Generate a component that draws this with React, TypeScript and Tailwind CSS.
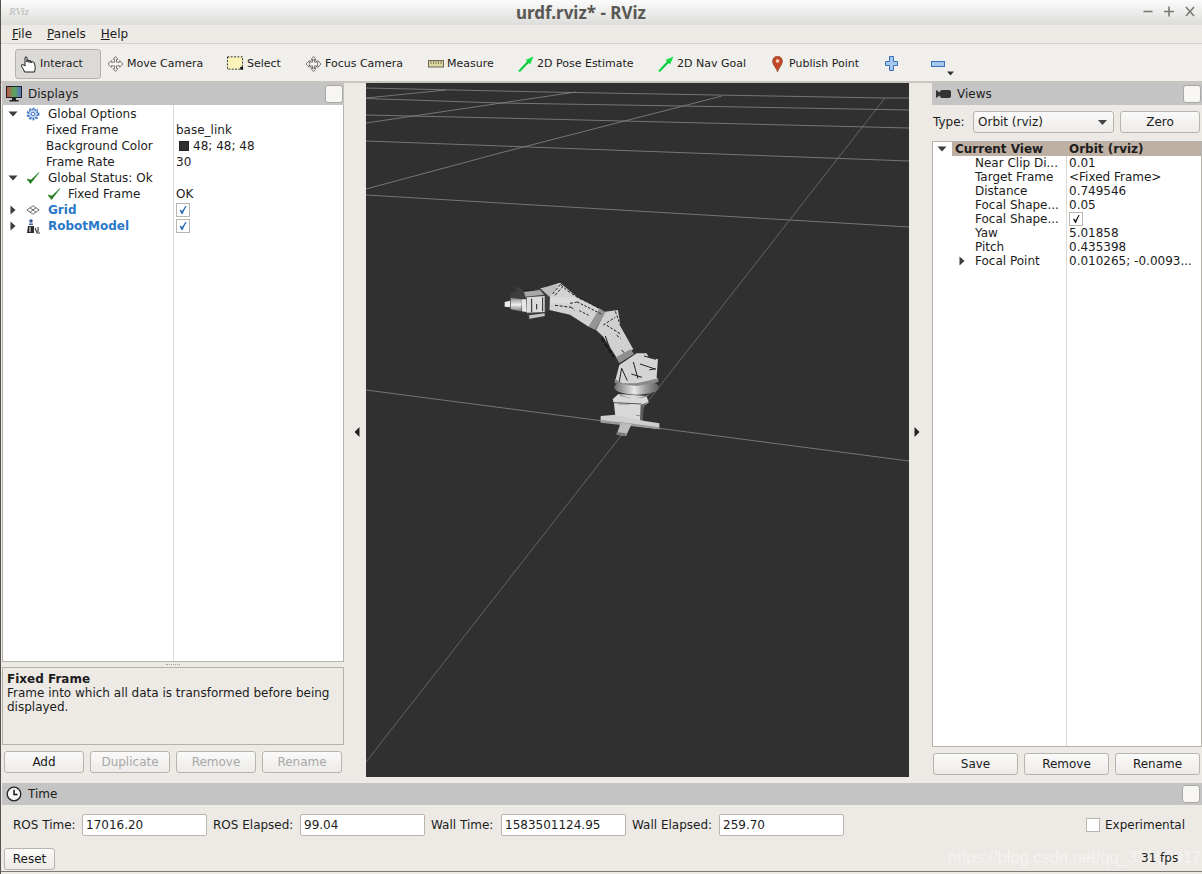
import React from "react";

const Check = ({ x = 0 }: { x?: number }) => (
  <svg width="14" height="14" viewBox="0 0 14 14" style={{ marginLeft: x }}>
    <path d="M1 8 L4.5 12.5 L13 1.5 L5 9 Z" fill="#1d7a1d" stroke="#1d7a1d" strokeWidth="0.6" />
  </svg>
);

const Tri = ({ open }: { open?: boolean }) =>
  open ? (
    <svg width="10" height="10" viewBox="0 0 10 10"><path d="M0.5 2.5 H9.5 L5 7.5 Z" fill="#3c3c3c" /></svg>
  ) : (
    <svg width="10" height="10" viewBox="0 0 10 10"><path d="M2.5 0.5 V9.5 L7.5 5 Z" fill="#3c3c3c" /></svg>
  );

const Box = () => (
  <span className="flex h-[14px] w-[14px] items-center justify-center border border-[#b9b6b0] bg-white">
    <svg width="10" height="10" viewBox="0 0 10 10"><path d="M2 5 L4 9 L8 1 L4.2 6.5 Z" fill="#1f5fb0" stroke="#1f5fb0" strokeWidth="0.8" /></svg>
  </span>
);

const Float = () => <span className="h-[18px] w-[18px] rounded-[3px] border border-[#a9a7a3] bg-[#f7f6f4]" />;

const Btn = ({ children, w, off }: { children: React.ReactNode; w: string; off?: boolean }) => (
  <button className={`flex h-[22px] items-center justify-center rounded-[3px] border border-[#b8b4ae] bg-gradient-to-b from-[#fbfafa] to-[#ecebe8] ${w} ${off ? "text-[#a8a8a6]" : "text-[#1a1a1a]"}`}>
    {children}
  </button>
);

const Row = ({ left, right }: { left: React.ReactNode; right?: React.ReactNode }) => (
  <div className="flex h-4 items-center">
    <div className="flex h-4 w-[171px] items-center">{left}</div>
    <div className="flex h-4 items-center pl-[2px]">{right}</div>
  </div>
);

const VRow = ({ a, b, tri }: { a: string; b: React.ReactNode; tri?: boolean }) => (
  <div className="flex h-[14px] items-center">
    <div className="relative flex h-[14px] w-[134px] items-center pl-[42px]">
      {tri && <span className="absolute left-[24px] top-[2px]"><Tri /></span>}
      <span className="whitespace-nowrap">{a}</span>
    </div>
    <div className="flex h-[14px] items-center pl-[2px]">{b}</div>
  </div>
);

const Field = ({ label, value, lw }: { label: string; value: string; lw: string }) => (
  <div className="flex items-center">
    <span className={`whitespace-nowrap ${lw}`}>{label}</span>
    <span className="flex h-[22px] w-[125px] items-center rounded-[2px] border border-[#b9b6b0] bg-white pl-[3px]">{value}</span>
  </div>
);

const Tool = ({ w, icon, label, active }: { w: string; icon: React.ReactNode; label: string; active?: boolean }) => (
  <div className={`flex h-[30px] shrink-0 items-center gap-[3px] ${w} ${active ? "rounded-[3px] border border-[#b4b1ab] bg-[#dcdad6] pl-[4px]" : "pl-[6px]"}`}>
    <span className="flex h-[18px] w-[17px] shrink-0 items-center justify-center">{icon}</span>
    {label && <span className="whitespace-nowrap">{label}</span>}
  </div>
);

const Cross = ({ ring }: { ring?: boolean }) => (
  <svg width="18" height="18" viewBox="0 0 18 18" fill="none" stroke="#77736d" strokeWidth="1">
    <path d="M9 1 L11.5 4 H10 V7 H13.5 V5.5 L17 9 L13.5 12.5 V11 H10 V14 H11.5 L9 17 L6.5 14 H8 V11 H4.5 V12.5 L1 9 L4.5 5.5 V7 H8 V4 H6.5 Z" fill="#f5f4f1" />
    {ring && <circle cx="9" cy="9" r="4.5" />}
  </svg>
);

const Goal = () => (
  <svg width="16" height="16" viewBox="0 0 16 16">
    <path d="M1 15.5 L10 6" stroke="#14e04a" strokeWidth="2.2" />
    <path d="M15.5 0.5 L7.5 4 L12 8.5 Z" fill="#12e045" />
    <path d="M3 13.5 L11 5" stroke="#0a7a2a" strokeWidth="0.6" />
  </svg>
);

const Robot = () => (
  <g transform="translate(124 187) scale(0.3333)">
    <defs>
      <linearGradient id="disk" x1="0" x2="1" y1="0" y2="0">
        <stop offset="0" stopColor="#6e6e6e" />
        <stop offset="0.45" stopColor="#e8e8e8" />
        <stop offset="0.7" stopColor="#9c9c9c" />
        <stop offset="1" stopColor="#5e5e5e" />
      </linearGradient>
      <linearGradient id="cyl" x1="0" x2="0" y1="0" y2="1">
        <stop offset="0" stopColor="#8a8a8a" />
        <stop offset="0.5" stopColor="#efefef" />
        <stop offset="1" stopColor="#777" />
      </linearGradient>
    </defs>
    {/* base */}
    <path d="M368 388 L385 372 L470 378 L476 398 L460 408 L458 452 L376 440 L372 400 Z" fill="#d9d9d9" />
    <path d="M452 405 L476 396 L460 408 L459 452 L450 452 Z" fill="#5c5c5c" />
    <path d="M372 398 L455 402" stroke="#555" strokeWidth="3" />
    <path d="M332 438 L376 434 L460 452 L508 460 L508 478 L420 466 L332 456 Z" fill="#cfcfcf" />
    <path d="M332 450 L420 460 L508 472 L508 478 L420 468 L332 458 Z" fill="#9a9a9a" />
    <path d="M392 458 L425 462 L408 498 L380 494 Z" fill="#bdbdbd" />
    <path d="M380 486 L408 490 L406 498 L380 494 Z" fill="#7c7c7c" />
    {/* disk */}
    <ellipse cx="440" cy="352" rx="67" ry="22" fill="url(#disk)" />
    <path d="M385 372 Q440 396 490 366 L470 380 Q435 392 392 378 Z" fill="url(#disk)" />
    {/* shoulder */}
    <path d="M388 285 L440 250 L470 250 L476 262 L504 268 L500 322 L505 335 L440 346 L374 338 Z" fill="#d4d4d4" />
    <path d="M374 326 L398 340 L440 340 L505 325 L505 336 L440 348 L376 340 Z" fill="#888" />
    {/* forearm */}
    <path d="M318 180 L345 125 L384 120 L392 170 L430 238 L382 266 L340 200 Z" fill="#d0d0d0" />
    <path d="M378 262 L422 238 L432 252 L388 280 Z" fill="#8f8f8f" />
    <path d="M296 170 L328 115 L346 126 L316 180 Z" fill="#959595" />
    {/* upper arm */}
    <path d="M152 56 L210 38 L262 82 L328 116 L296 170 L240 134 L178 120 L178 82 Z" fill="#d2d2d2" />
    <path d="M178 82 L262 82 L262 100 L178 100 Z" fill="#dcdcdc" />
    <path d="M150 55 L205 44 L178 84 Z" fill="#bcbcbc" />
    {/* wrist */}
    <path d="M78 48 L100 60 L152 56 L180 82 L178 120 L166 122 L166 140 L118 150 L108 128 L94 126 L62 118 L60 70 L78 62 Z" fill="#3e3e3e" />
    <path d="M62 84 L96 88 L94 124 L62 118 Z" fill="url(#cyl)" />
    <path d="M44 96 L60 92 L60 112 L44 110 Z" fill="#ececec" />
    <path d="M96 88 L108 88 L110 126 L96 124 Z" fill="#e6e6e6" />
    <path d="M110 82 L164 78 L164 126 L110 128 Z" fill="#dcdcdc" />
    <path d="M102 66 L150 60 L162 74 L106 80 Z" fill="#a8a8a8" />
    <path d="M118 136 L164 130 L164 138 L118 146 Z" fill="#c6c6c6" />
    <g stroke="#1e1e1e" strokeWidth="3" fill="none">
      <path d="M100 62 L135 60 M140 102 L140 118 M125 86 L125 126 M158 82 L158 124" />
      <path d="M195 106 L245 112 M240 100 L262 96 M188 72 L212 42 M195 76 L218 50 M212 44 L232 62 L262 82 L300 100 L330 116" strokeDasharray="9 5" />
      <path d="M262 96 L338 134 M268 122 L300 138 M245 112 L254 122" strokeDasharray="7 5" />
      <path d="M340 165 L376 142 M350 166 L392 192 M376 124 L392 168 M380 196 L392 205" strokeDasharray="8 5" />
      <path d="M395 240 L402 248 M395 295 L388 335 M395 295 L412 332 M430 276 L444 326 M424 312 L456 322 M450 282 L498 298 M462 258 L498 268 M478 300 L496 296" />
    </g>
    <path d="M334 204 L372 262" stroke="#151515" strokeWidth="5" strokeDasharray="16 4" />
    <path d="M346 198 L358 232" stroke="#151515" strokeWidth="3" />
    <path d="M385 402 L418 402 M438 436 L456 438" stroke="#666" strokeWidth="2" />
  </g>
);

const Scene = () => (
  <svg className="h-full w-full" viewBox="0 0 543 694" fill="none">
    <g stroke="#828282" strokeWidth="0.85">
      <path d="M0 5 L179 9 L519 15 L543 15" />
      <path d="M0 15.5 L134 20 L376 24 L543 27" />
      <path d="M0 32 L134 35 L543 45" />
      <path d="M0 58 L543 78" />
      <path d="M0 112 L134 120 L543 144" />
      <path d="M0 307 L543 378" />
      <path d="M0 40 L210 9" />
      <path d="M0 15 L80 7" />
      <path d="M0 106 L134 70 L356 13" />
      <path d="M519 15 L0 679" strokeWidth="0.65" />
    </g>
    <Robot />
  </svg>
);

const Dots = ({ w = "w-[14px]" }: { w?: string }) => (
  <span className={`${w} h-[2px] border-t border-dotted border-[#a8a5a0]`} />
);

export default function App() {
  return (
    <div className="relative flex h-[874px] w-[1202px] flex-col overflow-hidden border-l border-[#54524e] bg-[#edeae6] font-['DejaVu_Sans',sans-serif] text-[12px] leading-none text-[#1c1c1c]">
      {/* title bar */}
      <div className="relative flex h-[25px] shrink-0 items-center justify-center bg-gradient-to-b from-[#fbfbfb] to-[#dcdcda]">
        <span className="absolute left-[8px] top-[6px] font-['Liberation_Serif',serif] text-[11px] italic text-[#b9b9b7]">RViz</span>
        <span className="mr-[41px] font-['Noto_Sans',sans-serif] text-[17px] font-bold text-[#5a5854]">urdf.rviz* - RViz</span>
        <div className="absolute right-[6px] top-[4px] flex items-center gap-[9px]">
          <svg width="12" height="14" viewBox="0 0 12 14"><path d="M1.5 7.5 H10.5" stroke="#7a7874" strokeWidth="1.6" /></svg>
          <svg width="12" height="14" viewBox="0 0 12 14"><path d="M1 7.5 H11 M6 2.5 V12.5" stroke="#7a7874" strokeWidth="1.6" /></svg>
          <svg width="12" height="14" viewBox="0 0 12 14"><path d="M2 3 L10 12 M10 3 L2 12" stroke="#7a7874" strokeWidth="1.6" /></svg>
        </div>
      </div>
      {/* menu */}
      <div className="flex h-[19px] shrink-0 items-center gap-[15px] border-b border-[#d6d3ce] pl-[11px]">
        <span><u>F</u>ile</span>
        <span><u>P</u>anels</span>
        <span><u>H</u>elp</span>
      </div>
      {/* toolbar */}
      <div className="flex h-[39px] shrink-0 items-center border-b-2 border-[#c9c6c1] bg-[#f1efeb] pl-[14px] pt-[2px] text-[11px]">
        <Tool w="w-[86px]" active label="Interact" icon={
          <svg width="17" height="18" viewBox="0 0 17 18" fill="#fff" stroke="#1c1c1c" strokeWidth="1">
            <path d="M5 9 V2.5 Q6 1 7 2.5 V7 V5.5 Q8 4.5 9 5.5 V7.5 V6 Q10 5 11 6 V8 V7 Q12 6 13.5 7 C15.5 9 15.5 14 14.5 17 H4.5 C4 14 1 12 1.5 10 Q2.5 8.5 5 11 Z" />
          </svg>} />
        <Tool w="w-[120px]" label="Move Camera" icon={<Cross />} />
        <Tool w="w-[78px]" label="Select" icon={
          <svg width="18" height="15" viewBox="0 0 18 15"><rect x="0.5" y="0.5" width="16" height="13" fill="#fbf3b8" stroke="#222" strokeDasharray="2 1.5" /><rect x="14" y="11" width="3" height="3" fill="#111" /></svg>} />
        <Tool w="w-[122px]" label="Focus Camera" icon={<Cross ring />} />
        <Tool w="w-[90px]" label="Measure" icon={
          <svg width="16" height="8" viewBox="0 0 16 8"><rect x="0.5" y="0.5" width="15" height="6.5" fill="#dcd6a0" stroke="#6b6850" /><path d="M3 1 V4 M5.5 1 V4 M8 1 V4 M10.5 1 V4 M13 1 V4" stroke="#6b6850" strokeWidth="0.8" /></svg>} />
        <Tool w="w-[140px]" label="2D Pose Estimate" icon={<Goal />} />
        <Tool w="w-[112px]" label="2D Nav Goal" icon={<Goal />} />
        <Tool w="w-[114px]" label="Publish Point" icon={
          <svg width="11" height="16" viewBox="0 0 11 16"><path d="M5.5 16 C4.5 12 0.5 9 0.5 5.2 A5 5 0 0 1 10.5 5.2 C10.5 9 6.5 12 5.5 16 Z" fill="#c04a28" stroke="#7a3a22" strokeWidth="0.5" /><circle cx="5.5" cy="5" r="1.8" fill="#f3d6c4" /></svg>} />
        <Tool w="w-[46px]" label="" icon={
          <svg width="13" height="15" viewBox="0 0 13 15"><path d="M4.5 0.5 H8.5 V5.5 H12.5 V9.5 H8.5 V14.5 H4.5 V9.5 H0.5 V5.5 H4.5 Z" fill="#a6c8ee" stroke="#3a70b8" /></svg>} />
        <Tool w="w-[24px]" label="" icon={
          <svg width="14" height="6" viewBox="0 0 14 6"><rect x="0.5" y="0.5" width="13" height="5" fill="#a6c8ee" stroke="#3a70b8" /></svg>} />
        <svg className="mt-[19px]" width="7" height="5" viewBox="0 0 7 5"><path d="M0 0.5 H7 L3.5 4.5 Z" fill="#333" /></svg>
      </div>
      {/* main */}
      <div className="flex h-[694px] shrink-0 pl-px">
        {/* left panel */}
        <div className="flex w-[342px] shrink-0 flex-col pb-[4px]">
          <div className="flex h-[22px] shrink-0 items-center justify-between bg-[#c4c4c4] pl-[4px] pr-[1px]">
            <div className="flex items-center gap-[6px]">
              <svg width="16" height="16" viewBox="0 0 16 16">
                <defs><linearGradient id="rb" x1="0" x2="1" y1="0" y2="0"><stop offset="0" stopColor="#c94c4c" /><stop offset="0.5" stopColor="#58a858" /><stop offset="1" stopColor="#5c6cc8" /></linearGradient></defs>
                <rect x="0.5" y="0.5" width="15" height="11" fill="url(#rb)" stroke="#222" />
                <path d="M6 12 H10 V14 H12.5 V15.5 H3.5 V14 H6 Z" fill="#222" />
              </svg>
              <span>Displays</span>
            </div>
            <Float />
          </div>
          <div className="flex min-h-0 flex-1 flex-col border border-t-0 border-[#b5b2ac] bg-white">
            <div className="relative flex-1 pt-[1px]">
              <div className="absolute bottom-0 left-[170px] top-0 w-px bg-[#dcdad6]" />
              <Row left={<><span className="ml-[5px]"><Tri open /></span><svg className="ml-[8px]" width="14" height="14" viewBox="0 0 14 14"><circle cx="7" cy="7" r="4.6" fill="#cfe0f6" stroke="#3f76c4" strokeWidth="1.6" strokeDasharray="2 0.8" /><circle cx="7" cy="7" r="5.8" fill="none" stroke="#3f76c4" strokeWidth="1.4" strokeDasharray="1.6 2.2" /><circle cx="7" cy="7" r="1.8" fill="#fff" stroke="#3f76c4" /></svg><span className="ml-[8px]">Global Options</span></>} />
              <Row left={<span className="ml-[43px]">Fixed Frame</span>} right="base_link" />
              <Row left={<span className="ml-[43px]">Background Color</span>} right={<><span className="ml-[3px] mr-[4px] h-[10px] w-[10px] border border-[#222] bg-[#303030]" />48; 48; 48</>} />
              <Row left={<span className="ml-[43px]">Frame Rate</span>} right="30" />
              <Row left={<><span className="ml-[5px]"><Tri open /></span><span className="ml-[8px] flex"><Check /></span><span className="ml-[8px]">Global Status: Ok</span></>} />
              <Row left={<><span className="ml-[44px] flex"><Check /></span><span className="ml-[7px]">Fixed Frame</span></>} right="OK" />
              <Row left={<><span className="ml-[5px]"><Tri /></span><svg className="ml-[8px]" width="14" height="10" viewBox="0 0 14 10" fill="none" stroke="#4a4a4a"><path d="M7 0.8 L13.2 5 L7 9.2 L0.8 5 Z M4 2.8 L10 7.2 M10 2.8 L4 7.2" strokeWidth="0.8" /></svg><span className="ml-[8px] font-bold text-[#2a78c8]">Grid</span></>} right={<Box />} />
              <Row left={<><span className="ml-[5px]"><Tri /></span><svg className="ml-[8px]" width="15" height="15" viewBox="0 0 15 15"><circle cx="5" cy="2" r="1.8" fill="#35558a" /><rect x="3" y="4.5" width="4" height="1.4" fill="#35558a" /><path d="M2 7 H8 V14 H1 Z" fill="#2c2c2c" /><path d="M4 8 V13" stroke="#fff" strokeWidth="1" /><path d="M9 9 L11 14 L14 14 M12 8 L12 13" stroke="#333" strokeWidth="1.1" fill="none" /></svg><span className="ml-[7px] font-bold text-[#2a78c8]">RobotModel</span></>} right={<Box />} />
            </div>
          </div>
          <div className="flex h-[5px] shrink-0 items-center justify-center"><Dots /></div>
          <div className="h-[78px] shrink-0 border border-[#b5b2ac] px-[4px] pt-[4px] leading-[14px]">
            <div className="font-bold">Fixed Frame</div>
            <div className="mt-0">Frame into which all data is transformed before being displayed.</div>
          </div>
          <div className="mt-[6px] flex gap-[6px] pl-[2px]">
            <Btn w="w-[80px]">Add</Btn>
            <Btn w="w-[80px]" off>Duplicate</Btn>
            <Btn w="w-[80px]" off>Remove</Btn>
            <Btn w="w-[80px]" off>Rename</Btn>
          </div>
        </div>
        {/* left splitter */}
        <div className="flex w-[22px] shrink-0 items-center justify-center pt-[4px]">
          <svg className="ml-[4px]" width="6" height="10" viewBox="0 0 6 10"><path d="M5.5 0 V10 L0.5 5 Z" fill="#222" /></svg>
        </div>
        {/* viewport */}
        <div className="w-[543px] shrink-0 bg-[#303030]"><Scene /></div>
        {/* right splitter */}
        <div className="flex w-[23px] shrink-0 items-center pl-[5px] pt-[4px]">
          <svg width="6" height="10" viewBox="0 0 6 10"><path d="M0.5 0 V10 L5.5 5 Z" fill="#222" /></svg>
        </div>
        {/* right panel */}
        <div className="flex w-[270px] shrink-0 flex-col">
          <div className="flex h-[22px] shrink-0 items-center justify-between bg-[#c4c4c4] pl-[4px] pr-[1px]">
            <div className="flex items-center gap-[6px]">
              <svg width="15" height="10" viewBox="0 0 15 10"><path d="M0 1 L4 3.5 V6.5 L0 9 Z" fill="#333" /><rect x="4" y="1" width="11" height="8" rx="2" fill="#333" /></svg>
              <span>Views</span>
            </div>
            <Float />
          </div>
          <div className="mt-[6px] flex h-[22px] shrink-0 items-center">
            <span className="ml-[1px] w-[40px]">Type:</span>
            <div className="flex h-[22px] w-[141px] items-center justify-between rounded-[3px] border border-[#b8b4ae] bg-gradient-to-b from-[#fbfafa] to-[#ecebe8] pl-[4px] pr-[6px]">
              <span>Orbit (rviz)</span>
              <svg width="9" height="5" viewBox="0 0 9 5"><path d="M0 0 H9 L4.5 5 Z" fill="#444" /></svg>
            </div>
            <div className="ml-[6px]"><Btn w="w-[80px]">Zero</Btn></div>
          </div>
          <div className="relative mt-[8px] h-[606px] shrink-0 border border-[#b5b2ac] bg-white">
            <div className="absolute bottom-0 left-[133px] top-0 w-px bg-[#dcdad6]" />
            <div className="relative flex h-[14px] items-center font-bold">
              <span className="absolute left-[4px] top-[2px]"><Tri open /></span>
              <div className="ml-[19px] flex h-[14px] flex-1 items-center bg-[#bfb0a4]">
                <span className="w-[114px] pl-[3px]">Current View</span>
                <span className="pl-[3px]">Orbit (rviz)</span>
              </div>
            </div>
            <VRow a="Near Clip Di..." b="0.01" />
            <VRow a="Target Frame" b="<Fixed Frame>" />
            <VRow a="Distance" b="0.749546" />
            <VRow a="Focal Shape..." b="0.05" />
            <VRow a="Focal Shape..." b={
              <span className="flex h-[14px] w-[14px] items-center justify-center border border-[#b9b6b0]">
                <svg width="9" height="10" viewBox="0 0 9 10"><path d="M1.5 5 L3.5 9 L7 1 L3.8 6.5 Z" fill="#111" stroke="#111" strokeWidth="0.7" /></svg>
              </span>} />
            <VRow a="Yaw" b="5.01858" />
            <VRow a="Pitch" b="0.435398" />
            <VRow a="Focal Point" b="0.010265; -0.0093..." tri />
          </div>
          <div className="mt-[6px] flex gap-[6px] pl-px">
            <Btn w="w-[85px]">Save</Btn>
            <Btn w="w-[85px]">Remove</Btn>
            <Btn w="w-[85px]">Rename</Btn>
          </div>
        </div>
      </div>
      {/* time */}
      <div className="mt-[6px] ml-px flex h-[22px] shrink-0 items-center justify-between bg-[#c4c4c4] pl-[4px] pr-[2px]">
        <div className="flex items-center gap-[6px]">
          <svg width="16" height="16" viewBox="0 0 16 16" fill="none"><circle cx="8" cy="8" r="6.8" fill="#f5f5f5" stroke="#222" strokeWidth="1.3" /><path d="M8 3.8 V8.5 H11.5" stroke="#111" strokeWidth="1.4" /></svg>
          <span>Time</span>
        </div>
        <Float />
      </div>
      <div className="mt-[9px] flex h-[22px] shrink-0 items-center pl-[12px]">
        <div className="flex gap-[6px]">
          <Field label="ROS Time:" value="17016.20" lw="w-[69px]" />
          <Field label="ROS Elapsed:" value="99.04" lw="w-[87px]" />
          <Field label="Wall Time:" value="1583501124.95" lw="w-[70px]" />
          <Field label="Wall Elapsed:" value="259.70" lw="w-[87px]" />
        </div>
        <span className="ml-[242px] h-[14px] w-[14px] border border-[#b9b6b0] bg-white" />
        <span className="ml-[5px]">Experimental</span>
      </div>
      <div className="relative mt-[12px] flex h-[22px] shrink-0 items-center pl-[3px]">
        <Btn w="w-[51px]">Reset</Btn>
        <span className="absolute left-[947px] top-[-2px] whitespace-nowrap font-['Liberation_Sans',sans-serif] text-[16.5px] leading-[22px] text-white/45">https://blog.csdn.net/qq_37266917</span>
        <span className="absolute left-[1140px] top-[4px]">31 fps</span>
      </div>
      <div className="mt-[1px] h-px w-full bg-[#7c7a76]" />
    </div>
  );
}
